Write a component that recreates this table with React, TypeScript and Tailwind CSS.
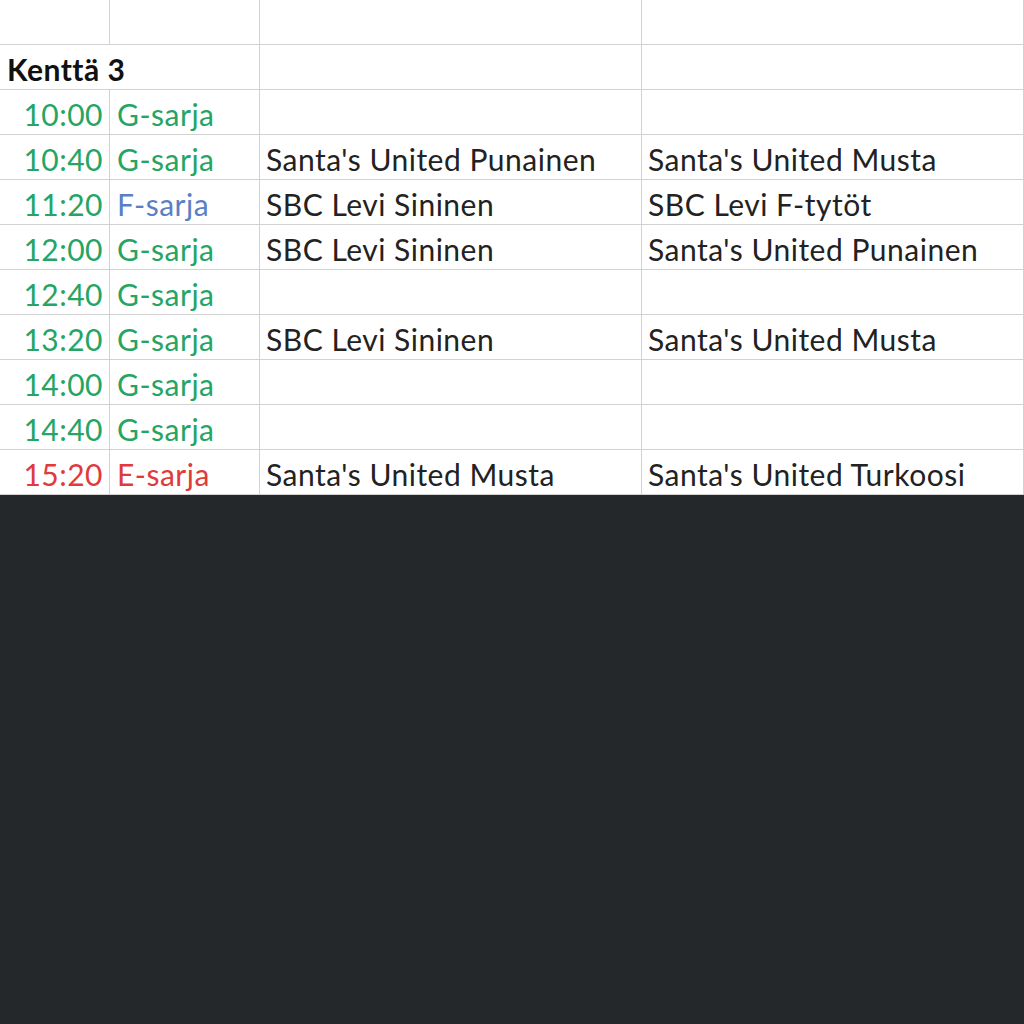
import React from "react";

type Row = { time?: string; series?: string; a?: string; b?: string; color?: string; header?: string };

const GREEN = "text-[#25a564]";
const rows: Row[] = [
  {},
  { header: "Kenttä 3" },
  { time: "10:00", series: "G-sarja", color: "g" },
  { time: "10:40", series: "G-sarja", a: "Santa's United Punainen", b: "Santa's United Musta", color: "g" },
  { time: "11:20", series: "F-sarja", a: "SBC Levi Sininen", b: "SBC Levi F-tytöt", color: "f" },
  { time: "12:00", series: "G-sarja", a: "SBC Levi Sininen", b: "Santa's United Punainen", color: "g" },
  { time: "12:40", series: "G-sarja", color: "g" },
  { time: "13:20", series: "G-sarja", a: "SBC Levi Sininen", b: "Santa's United Musta", color: "g" },
  { time: "14:00", series: "G-sarja", color: "g" },
  { time: "14:40", series: "G-sarja", color: "g" },
  { time: "15:20", series: "E-sarja", a: "Santa's United Musta", b: "Santa's United Turkoosi", color: "e" },
];

const cell = "h-[45px] pt-[5px] border-r border-b border-[#d2d2d2] flex items-center overflow-visible whitespace-nowrap";

export default function App() {
  return (
    <div className="w-[1024px] h-[1024px] bg-[#25282b] flex flex-col" style={{ fontFamily: "Lato, 'Open Sans', sans-serif" }}>
      <div className="bg-white grid grid-cols-[110px_150px_382px_382px] text-[30px] tracking-[0.5px] text-[#222]">
        {rows.map((r, i) => {
          if (r.header) {
            return (
              <React.Fragment key={i}>
                <div className={`${cell} col-span-2 pl-[7px] font-bold text-[#111] text-[30px]`}>{r.header}</div>
                <div className={cell}></div>
                <div className={cell}></div>
              </React.Fragment>
            );
          }
          const tc = r.color === "e" ? "text-[#e03a3a]" : GREEN;
          const sc = r.color === "e" ? "text-[#e03a3a]" : r.color === "f" ? "text-[#5a7fc4]" : GREEN;
          return (
            <React.Fragment key={i}>
              <div className={`${cell} justify-end pr-[6px] ${tc}`}>{r.time}</div>
              <div className={`${cell} pl-[7px] ${sc}`}>{r.series}</div>
              <div className={`${cell} pl-[6px]`}>{r.a}</div>
              <div className={`${cell} pl-[6px]`}>{r.b}</div>
            </React.Fragment>
          );
        })}
      </div>
    </div>
  );
}
